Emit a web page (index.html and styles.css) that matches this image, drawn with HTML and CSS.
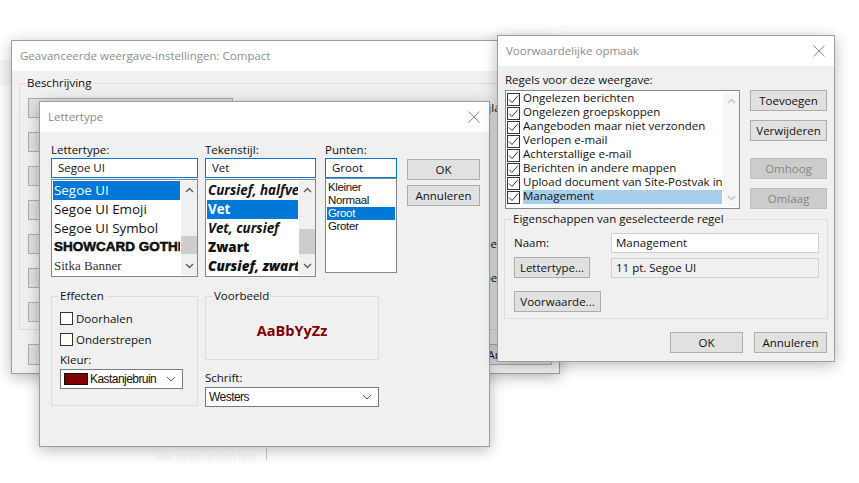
FILE: index.html
```html
<!DOCTYPE html>
<html lang="nl">
<head>
<meta charset="utf-8">
<title>Voorwaardelijke opmaak</title>
<link rel="stylesheet" href="styles.css">
</head>
<body>
<div class="desktop">
  <div class="ghost ghost-b"></div>
  <div class="ghost-line"></div>
  <div class="ghost-text">ww. lorem ipsum text</div>

  <section class="window win-back">
    <header class="titlebar"><span>Geavanceerde weergave-instellingen: Compact</span></header>
    <div class="back-body">
      <fieldset class="group back-group">
        <legend>Beschrijving</legend>
        <div class="back-row"><span class="btn back-btn"></span><span class="back-text t-a">Bijlagen</span></div>
        <div class="back-row"><span class="btn back-btn"></span></div>
        <div class="back-row"><span class="btn back-btn"></span></div>
        <div class="back-row"><span class="btn back-btn"></span></div>
        <div class="back-row"><span class="btn back-btn"></span><span class="back-text t-b">Kader</span></div>
        <div class="back-row"><span class="btn back-btn"></span><span class="back-text t-c">Tabel</span></div>
        <div class="back-row"><span class="btn back-btn"></span></div>
      </fieldset>
      <div class="back-foot">
        <span class="btn">Beeld</span>
        <span class="btn">Annuleren</span>
      </div>
    </div>
  </section>

  <section class="window win-font">
    <header class="titlebar"><span>Lettertype</span>
      <svg class="close" width="12" height="12" viewBox="0 0 12 12"><path d="M.5.5l11 11M11.5.5l-11 11" stroke="#8a8a8a" fill="none"/></svg>
    </header>
    <div class="font-body">
      <div class="font-top">
        <div class="col col-1">
          <label class="lbl">Lettertype:</label>
          <div class="input focus">Segoe UI</div>
          <div class="list list-big">
            <ul class="items">
              <li class="sel">Segoe UI</li>
              <li>Segoe UI Emoji</li>
              <li>Segoe UI Symbol</li>
              <li class="f-show">SHOWCARD GOTHIC</li>
              <li class="f-sitka">Sitka Banner</li>
            </ul>
            <div class="sbar">
              <svg class="chev" width="9" height="6" viewBox="0 0 9 6"><path d="M1 5l3.500-3.500L8 5" stroke="#606060" stroke-width="1.500" fill="none"/></svg>
              <div class="thumb thumb-1"></div>
              <svg class="chev chev-end" width="9" height="6" viewBox="0 0 9 6"><path d="M1 1l3.500 3.500L8 1" stroke="#606060" stroke-width="1.500" fill="none"/></svg>
            </div>
          </div>
        </div>
        <div class="col col-2">
          <label class="lbl">Tekenstijl:</label>
          <div class="input focus">Vet</div>
          <div class="list list-big">
            <ul class="items style-items">
              <li class="bi">Cursief, halfvet</li>
              <li class="sel b">Vet</li>
              <li class="bi">Vet, cursief</li>
              <li class="bk">Zwart</li>
              <li class="bki">Cursief, zwart</li>
            </ul>
            <div class="sbar">
              <svg class="chev" width="9" height="6" viewBox="0 0 9 6"><path d="M1 5l3.500-3.500L8 5" stroke="#606060" stroke-width="1.500" fill="none"/></svg>
              <div class="thumb thumb-2"></div>
              <svg class="chev chev-end" width="9" height="6" viewBox="0 0 9 6"><path d="M1 1l3.500 3.500L8 1" stroke="#606060" stroke-width="1.500" fill="none"/></svg>
            </div>
          </div>
        </div>
        <div class="col col-3">
          <label class="lbl">Punten:</label>
          <div class="input focus">Groot</div>
          <ul class="list size-list">
            <li>Kleiner</li>
            <li>Normaal</li>
            <li class="sel">Groot</li>
            <li>Groter</li>
          </ul>
        </div>
        <div class="col col-4">
          <span class="btn">OK</span>
          <span class="btn">Annuleren</span>
        </div>
      </div>
      <div class="font-bottom">
        <fieldset class="group effects">
          <legend>Effecten</legend>
          <div class="check-row"><span class="check"></span>Doorhalen</div>
          <div class="check-row"><span class="check"></span>Onderstrepen</div>
          <div class="lbl color-lbl">Kleur:</div>
          <div class="select color-select"><span class="swatch"></span><span class="narrow">Kastanjebruin</span>
            <svg class="drop" width="10" height="6" viewBox="0 0 10 6"><path d="M1 1l4 4 4-4" stroke="#555" fill="none"/></svg>
          </div>
        </fieldset>
        <div class="preview-col">
          <fieldset class="group preview">
            <legend>Voorbeeld</legend>
            <b class="sample">AaBbYyZz</b>
          </fieldset>
          <div class="lbl script-lbl">Schrift:</div>
          <div class="select"><span class="narrow">Westers</span>
            <svg class="drop" width="10" height="6" viewBox="0 0 10 6"><path d="M1 1l4 4 4-4" stroke="#555" fill="none"/></svg>
          </div>
        </div>
      </div>
    </div>
  </section>

  <section class="window win-rules">
    <header class="titlebar"><span>Voorwaardelijke opmaak</span>
      <svg class="close" width="12" height="12" viewBox="0 0 12 12"><path d="M.5.5l11 11M11.5.5l-11 11" stroke="#8a8a8a" fill="none"/></svg>
    </header>
    <div class="rules-body">
      <div class="lbl rules-lbl">Regels voor deze weergave:</div>
      <div class="rules-top">
        <div class="list rules-list">
          <ul class="rule-items">
            <li><span class="check on"><svg width="11" height="11" viewBox="0 0 11 11"><path d="M1 5.500l3 3 6-7" stroke="#333" fill="none"/></svg></span><span class="rule-name">Ongelezen berichten</span></li>
            <li><span class="check on"><svg width="11" height="11" viewBox="0 0 11 11"><path d="M1 5.500l3 3 6-7" stroke="#333" fill="none"/></svg></span><span class="rule-name">Ongelezen groepskoppen</span></li>
            <li><span class="check on"><svg width="11" height="11" viewBox="0 0 11 11"><path d="M1 5.500l3 3 6-7" stroke="#333" fill="none"/></svg></span><span class="rule-name">Aangeboden maar niet verzonden</span></li>
            <li><span class="check on"><svg width="11" height="11" viewBox="0 0 11 11"><path d="M1 5.500l3 3 6-7" stroke="#333" fill="none"/></svg></span><span class="rule-name">Verlopen e-mail</span></li>
            <li><span class="check on"><svg width="11" height="11" viewBox="0 0 11 11"><path d="M1 5.500l3 3 6-7" stroke="#333" fill="none"/></svg></span><span class="rule-name">Achterstallige e-mail</span></li>
            <li><span class="check on"><svg width="11" height="11" viewBox="0 0 11 11"><path d="M1 5.500l3 3 6-7" stroke="#333" fill="none"/></svg></span><span class="rule-name">Berichten in andere mappen</span></li>
            <li><span class="check on"><svg width="11" height="11" viewBox="0 0 11 11"><path d="M1 5.500l3 3 6-7" stroke="#333" fill="none"/></svg></span><span class="rule-name">Upload document van Site-Postvak in het</span></li>
            <li><span class="check on"><svg width="11" height="11" viewBox="0 0 11 11"><path d="M1 5.500l3 3 6-7" stroke="#333" fill="none"/></svg></span><span class="rule-name picked">Management</span></li>
          </ul>
          <div class="sbar sbar-rules">
            <svg class="chev" width="9" height="6" viewBox="0 0 9 6"><path d="M1 5l3.500-3.500L8 5" stroke="#c4c4c4" stroke-width="1.500" fill="none"/></svg>
            <svg class="chev chev-end" width="9" height="6" viewBox="0 0 9 6"><path d="M1 1l3.500 3.500L8 1" stroke="#c4c4c4" stroke-width="1.500" fill="none"/></svg>
          </div>
        </div>
        <div class="rule-buttons">
          <span class="btn">Toevoegen</span>
          <span class="btn">Verwijderen</span>
          <span class="btn off gap-up">Omhoog</span>
          <span class="btn off">Omlaag</span>
        </div>
      </div>
      <fieldset class="group props">
        <legend>Eigenschappen van geselecteerde regel</legend>
        <div class="prop-grid">
          <div class="lbl">Naam:</div>
          <div class="input plain">Management</div>
          <span class="btn font-btn">Lettertype...</span>
          <div class="input readonly">11 pt. Segoe UI</div>
          <span class="btn cond-btn">Voorwaarde...</span>
        </div>
      </fieldset>
      <div class="rules-foot">
        <span class="btn">OK</span>
        <span class="btn">Annuleren</span>
      </div>
    </div>
  </section>
</div>
</body>
</html>
```
FILE: styles.css
```css
* { box-sizing: border-box; }
html, body { margin: 0; padding: 0; background: #fff; }
body { font: 11.5px/16px "Open Sans", "Noto Sans", sans-serif; color: #111; }
ul { list-style: none; margin: 0; padding: 0; }

.desktop { position: relative; width: 859px; height: 483px; overflow: hidden; background: #fff; }

.ghost { position: absolute; background: #f6f6f6; }
.ghost-b { left: 0; top: 60px; width: 11px; height: 25px; }
.ghost-line { position: absolute; left: 266px; top: 446px; width: 1px; height: 14px; background: #c8c8c8; }
.ghost-text { position: absolute; left: 156px; top: 449px; font-size: 10px; color: #f3f3f3; }

.window { position: absolute; display: flex; flex-direction: column; background: #f0f0f0; border: 1px solid #9d9d9d; box-shadow: 0 3px 14px rgba(0, 0, 0, .28); }
.win-back { left: 11px; top: 40px; width: 549px; height: 334px; }
.win-font { left: 39px; top: 101px; width: 451px; height: 346px; }
.win-rules { left: 497px; top: 35px; width: 338px; height: 327px; }

.titlebar { flex: none; display: flex; align-items: center; justify-content: space-between; height: 30px; padding: 0 9px 0 8px; background: #fff; color: #8d8d8d; }

.btn { flex: none; display: flex; align-items: center; justify-content: center; width: 73px; height: 21px; background: #e1e1e1; border: 1px solid #adadad; color: #111; white-space: nowrap; }
.btn.off { background: #ccc; border-color: #bfbfbf; color: #838383; }

.lbl { display: block; height: 16px; }

.group { margin: 0; padding: 0; min-width: 0; border: 1px solid #dcdcdc; }
.group legend { padding: 0 2px; line-height: 16px; height: 16px; }

.input { display: flex; align-items: center; height: 20px; padding: 0 6px; background: #fff; white-space: nowrap; }
.input.focus { border: 1px solid #0078d7; }
.input.plain { border: 1px solid #d0d0d0; padding: 0 4px; }
.input.readonly { border: 1px solid #d0d0d0; background: #f0f0f0; padding: 0 4px; }

.list { display: flex; background: #fff; border: 1px solid #82878c; }

.sbar { flex: none; display: flex; flex-direction: column; align-items: center; width: 16px; margin: 1px 0 1px auto; background: #f0f0f0; }
.chev { flex: none; margin-top: 6px; }
.chev-end { margin-top: auto; margin-bottom: 6px; }
.thumb { width: 16px; background: #cdcdcd; }
.thumb-1 { height: 18px; margin-top: 43px; }
.thumb-2 { height: 25px; margin-top: 36px; }

/* Back window */
.back-body { flex: 1; display: flex; flex-direction: column; padding: 4px 7px 0 7px; }
.back-group { display: flex; flex-direction: column; gap: 14px; height: 255px; padding: 7px 0 0 8px; }
.back-group legend { margin-left: -3px; }
.back-row { display: flex; align-items: center; height: 20px; flex: none; }
.back-btn { width: 205px; height: 20px; }
.back-text { white-space: nowrap; }
.t-a { margin-left: 245px; }
.t-b { margin-left: 237px; }
.t-c { margin-left: 238px; }
.back-foot { display: flex; justify-content: space-between; padding: 14px 0 0 9px; }

/* Font window */
.font-body { flex: 1; padding: 10px 0 0 11px; }
.font-top { display: flex; }
.col-1 { width: 147px; margin-right: 7px; }
.col-2 { width: 111px; margin-right: 9px; }
.col-3 { width: 72px; margin-right: 10px; }
.col-4 { display: flex; flex-direction: column; gap: 5px; padding-top: 17px; }
.list-big { height: 98px; margin-top: 1px; font-size: 13.4px; }
.items { flex: 1; min-width: 0; padding: 1px; overflow: hidden; }
.items li { height: 19px; line-height: 18px; padding-left: 1px; white-space: nowrap; overflow: hidden; }
.sel { background: #0078d7; color: #fff; }
.f-show { font-family: "Liberation Sans", sans-serif; font-weight: 700; font-size: 13.5px; -webkit-text-stroke: .5px #000; }
.f-sitka { font-family: "Liberation Serif", serif; font-size: 13px; color: #333; }
.bi { font-weight: 700; font-style: italic; }
.b { font-weight: 700; }
.bk { font-weight: 800; }
.bki { font-weight: 800; font-style: italic; }
.size-list { display: block; height: 95px; padding: 2px 1px 0; font: 11.5px/13px "Liberation Sans", sans-serif; letter-spacing: -.35px; }
.size-list li { height: 13px; padding-left: 1px; }

.font-bottom { display: flex; gap: 7px; margin-top: 11px; }
.effects { width: 147px; height: 118px; padding: 8px 0 0 8px; }
.effects legend { margin-left: -2px; }
.check-row { display: flex; align-items: center; gap: 3px; height: 13px; line-height: 13px; margin-bottom: 8px; }
.check { flex: none; display: flex; align-items: center; justify-content: center; width: 13px; height: 13px; background: #fff; border: 1px solid #333; }
.color-lbl { margin-top: -2px; margin-bottom: 1px; }
.select { display: flex; align-items: center; height: 20px; padding: 0 3px; background: #fff; border: 1px solid #7a7a7a; }
.color-select { width: 123px; }
.swatch { flex: none; width: 24px; height: 12px; margin-right: 2px; background: #800000; border: 1px solid #111; }
.narrow { font-family: "Liberation Sans", sans-serif; font-size: 12px; letter-spacing: -.55px; }
.drop { flex: none; margin-left: auto; margin-right: 3px; }
.preview-col { width: 174px; }
.preview { display: flex; align-items: center; justify-content: center; height: 72px; padding-bottom: 2px; }
.preview legend { margin-left: 6px; }
.sample { font-size: 14.5px; color: #800000; }
.script-lbl { margin-top: 10px; margin-bottom: 1px; }

/* Rules window */
.rules-body { flex: 1; padding: 6px 7px 0 6px; }
.rules-lbl { margin-left: 1px; }
.rules-top { display: flex; gap: 10px; margin: 2px 0 0 0; }
.rules-list { width: 235px; height: 119px; margin-left: 1px; }
.rule-items { flex: 1; min-width: 0; padding: 1px; }
.rule-items li { display: flex; align-items: center; height: 14px; gap: 3px; }
.check.on { flex: none; }
.rule-name { flex: 1; min-width: 0; height: 14px; line-height: 12px; white-space: nowrap; overflow: hidden; }
.picked { background: #a6cfee; }
.sbar-rules { background: #f6f6f6; }
.rule-buttons { display: flex; flex-direction: column; gap: 9px; width: 77px; }
.rule-buttons .btn { width: 77px; }
.gap-up { margin-top: 8px; }
.props { width: 324px; height: 108px; margin-top: 2px; padding: 6px 0 0 9px; }
.props legend { margin-left: -3px; }
.prop-grid { display: grid; grid-template-columns: 97px 208px; grid-auto-rows: auto; row-gap: 4px; align-items: center; }
.font-btn { width: 76px; }
.cond-btn { width: 87px; margin-top: 9px; }
.rules-foot { display: flex; justify-content: flex-end; gap: 11px; margin-top: 13px; }
```
